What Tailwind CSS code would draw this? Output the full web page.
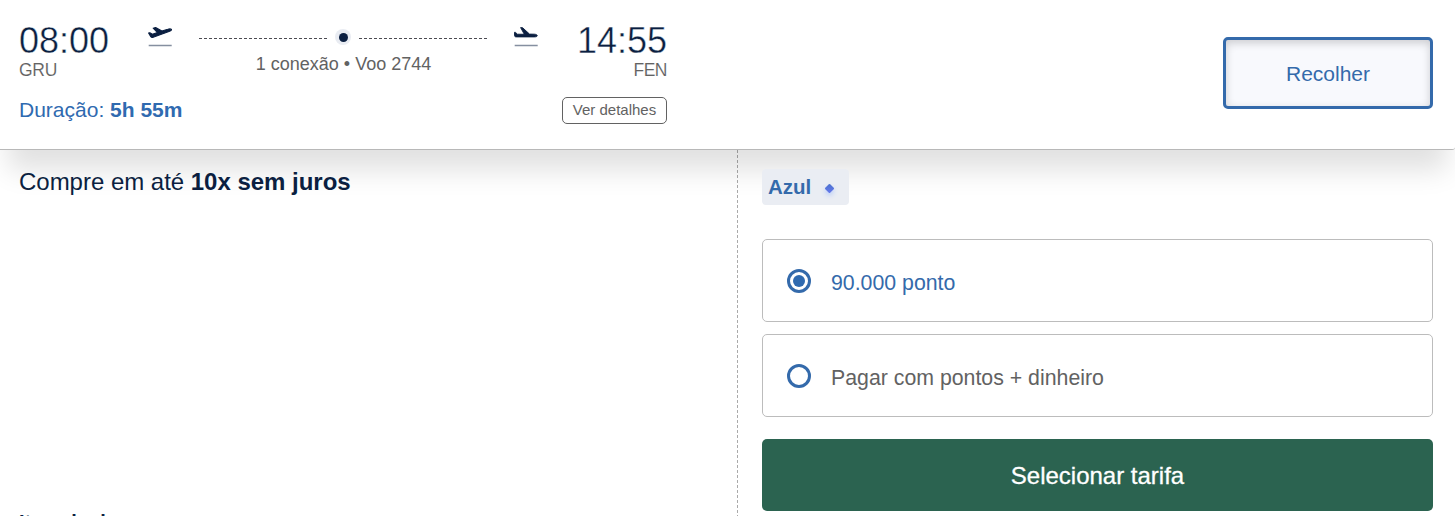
<!DOCTYPE html>
<html lang="pt-BR">
<head>
<meta charset="utf-8">
<title>Voo GRU – FEN</title>
<script src="https://cdn.jsdelivr.net/npm/@tailwindcss/browser@4"></script>
</head>
<body class="h-[516px] overflow-hidden bg-white font-['Liberation_Sans',Arial,sans-serif] text-[#0b1f41] flex flex-col">
  <header class="relative z-10 h-[150px] shrink-0 flex justify-between items-start bg-white border-b border-[#b8b8b8] rounded-br-[3px] pl-[19px] pr-[22px] shadow-[0_28px_26px_-8px_rgba(0,0,0,0.12)]">
    <div class="w-[648px]">
      <div class="flex items-start">
        <div class="w-[129px] pt-5">
          <div class="h-10 leading-[42px] text-[36px] [-webkit-text-stroke:0.4px_white]">08:00</div>
          <div class="leading-[20px] text-[17.5px] tracking-[-0.3px] text-[#626262] [-webkit-text-stroke:0.1px_white]">GRU</div>
        </div>
        <svg class="mt-[24px] w-6 h-6" viewBox="0 0 24 24"><path fill="#0b1f41" stroke="#0b1f41" stroke-width="1.1" stroke-linejoin="round" d="M5.200 4.200l2.400-.7 6.300 3.500 5.900-1.800c1.500-.5 3.100-.4 3.700.2.1.9-.8 1.500-1.900 1.900L5.200 13.300c-.9.300-1.900.1-2.400-.6L.6 9l1.200-.3 2.600 1.600 5.100-1.700z"/><path stroke="#0b1f41" stroke-opacity=".5" stroke-width="1.500" d="M.7 21.500h23"/></svg>
        <div class="mt-[30px] ml-[27px] w-[289px] flex flex-col">
          <div class="h-4 flex items-center">
            <svg class="w-[129px] h-px" viewBox="0 0 129 1"><path d="M0 .5h129" stroke="#4b4b52" stroke-dasharray="3 2"/></svg>
            <span class="-mt-[2px] ml-[7px] mr-2 w-4 h-4 rounded-full bg-[#e9ecf2] flex items-center justify-center"><span class="w-[9px] h-[9px] rounded-full bg-[#0b1f41]"></span></span>
            <svg class="w-[129px] h-px" viewBox="0 0 129 1"><path d="M0 .5h129" stroke="#4b4b52" stroke-dasharray="3 2"/></svg>
          </div>
          <div class="mt-[8px] leading-[20px] text-center text-[18px] text-[#626262] whitespace-nowrap">1 conexão • Voo 2744</div>
        </div>
        <svg class="mt-[24px] ml-[26px] w-6 h-6" viewBox="0 0 24 24"><path fill="#0b1f41" stroke="#0b1f41" stroke-width=".9" stroke-linejoin="round" d="M6.600 3.600l2 .1 6.900 6.400 5 .1c1.600.1 2.600.6 2.900 1.600-.4.800-1.500 1.100-2.800 1.100H2.300C.9 12.900.5 12.200.5 11.200V8.300l1 .1 1.900 1.800 6.900.1z"/><path stroke="#0b1f41" stroke-opacity=".5" stroke-width="1.500" d="M.7 21.500h23"/></svg>
        <div class="flex-1 pt-5 text-right">
          <div class="h-10 leading-[42px] text-[36px] [-webkit-text-stroke:0.4px_white]">14:55</div>
          <div class="leading-[20px] text-[17.5px] tracking-[-0.5px] text-[#626262] [-webkit-text-stroke:0.1px_white]">FEN</div>
        </div>
      </div>
      <div class="mt-[17px] flex items-start justify-between">
        <div class="mt-[1px] leading-[24px] text-[21px] text-[#2f6ab0]">Duração: <b>5h 55m</b></div>
        <button class="w-[105px] h-[27px] border border-[#626262] rounded-[5px] text-[15px] leading-[22px] pb-[2px] text-[#626262]">Ver detalhes</button>
      </div>
    </div>
    <button class="mt-[37px] w-[210px] h-[72px] rounded-[5px] border-3 border-[#346aab] bg-[#f8f9fd] pt-[2px] text-[21px] text-[#346aab] shadow-[inset_0_3px_8px_rgba(0,0,0,0.18)]">Recolher</button>
  </header>
  <main class="flex-1 min-h-0 flex">
    <section class="relative z-20 w-[738px] shrink-0 pl-[19px] flex flex-col">
      <p class="mt-[18px] leading-[28px] text-[24px] tracking-[-0.02px]">Compre em até <b>10x sem juros</b></p>
      <h3 class="mt-[314px] leading-[24px] text-[20px] font-bold">Itens inclusos:</h3>
    </section>
    <svg class="w-px h-[366px] -ml-px shrink-0" viewBox="0 0 1 366"><path d="M.5 0v366" stroke="#aaa" stroke-dasharray="3 2"/></svg>
    <section class="relative z-20 flex-1 pl-6 pr-[22px] pt-[19px] flex flex-col items-start">
      <div class="w-[87px] h-9 rounded-sm bg-[#eaedf3] flex items-center pl-[6px]">
        <b class="text-[20.5px] leading-[24px] text-[#346aab]">Azul</b>
        <span class="ml-[15px] mt-[2px] w-[7px] h-[7px] rotate-45 rounded-[1px] bg-linear-to-br from-[#4a72cc] to-[#6678ee] shadow-[2px_2px_5px_#b8cdf8]"></span>
      </div>
      <div class="mt-[34px] w-full h-[83px] border border-[#bcbcbc] rounded-[5px] bg-white flex pl-6">
        <span class="mt-[29px] w-6 h-6 rounded-full border-3 border-[#346aab] flex items-center justify-center"><span class="w-3 h-3 rounded-full bg-[#2f6ab0]"></span></span>
        <span class="mt-[31px] ml-5 leading-[24px] text-[21.3px] text-[#346aab]">90.000 ponto</span>
      </div>
      <div class="mt-3 w-full h-[83px] border border-[#bcbcbc] rounded-[5px] bg-white flex pl-6">
        <span class="mt-[29px] w-6 h-6 rounded-full border-3 border-[#346aab]"></span>
        <span class="mt-[31px] ml-5 leading-[24px] text-[21.3px] text-[#626262]">Pagar com pontos + dinheiro</span>
      </div>
      <button class="mt-[22px] w-full h-[72px] pt-[2px] rounded-[5px] bg-[#2b6350] text-white text-[24px] [-webkit-text-stroke:0.3px_white]">Selecionar tarifa</button>
    </section>
  </main>
</body>
</html>
